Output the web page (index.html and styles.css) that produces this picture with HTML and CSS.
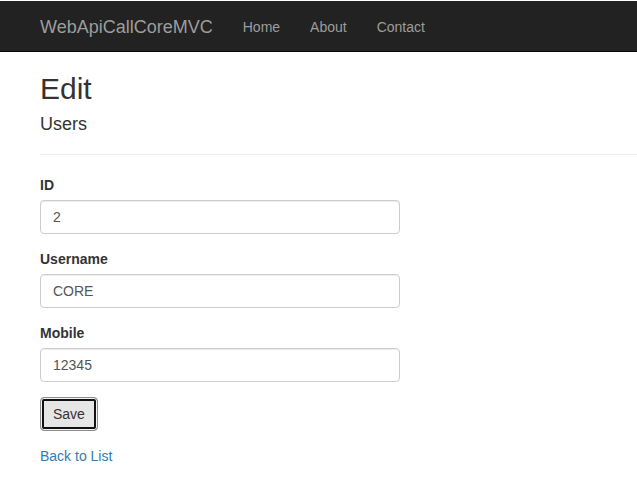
FILE: index.html
```html
<!DOCTYPE html>
<html>
<head>
<meta charset="utf-8">
<title>Edit - WebApiCallCoreMVC</title>
<link rel="stylesheet" href="styles.css">
</head>
<body>
<nav class="navbar">
  <div class="navbar-container">
    <a class="brand" href="#">WebApiCallCoreMVC</a>
    <ul class="nav">
      <li><a href="#">Home</a></li>
      <li><a href="#">About</a></li>
      <li><a href="#">Contact</a></li>
    </ul>
  </div>
</nav>
<main class="content">
  <h2 class="title">Edit</h2>
  <h4 class="subtitle">Users</h4>
  <hr class="divider">
  <form class="form">
    <div class="form-group">
      <label class="label">ID</label>
      <input class="input" type="text" value="2">
    </div>
    <div class="form-group">
      <label class="label">Username</label>
      <input class="input" type="text" value="CORE">
    </div>
    <div class="form-group">
      <label class="label">Mobile</label>
      <input class="input" type="text" value="12345">
    </div>
    <div class="form-group">
      <button class="btn" type="button">Save</button>
    </div>
  </form>
  <div class="back"><a class="link" href="#">Back to List</a></div>
</main>
</body>
</html>
```
FILE: styles.css
```css
* { box-sizing: border-box; }
html, body { margin: 0; padding: 0; }
body {
  font-family: "Liberation Sans", Arial, sans-serif;
  font-size: 14px;
  line-height: 20px;
  color: #333;
  background: #fff;
  padding-top: 1px;
}
.navbar {
  background: #222;
  border-bottom: 1px solid #080808;
  height: 51px;
}
.navbar-container {
  display: flex;
  align-items: flex-start;
  padding-left: 25px;
}
.brand {
  display: block;
  padding: 16px 15px 14px;
  font-size: 18px;
  line-height: 20px;
  height: 50px;
  color: #9d9d9d;
  text-decoration: none;
}
.nav {
  display: flex;
  list-style: none;
  margin: 0;
  padding: 0;
}
.nav a {
  display: block;
  padding: 16px 15px 14px;
  line-height: 20px;
  color: #9d9d9d;
  text-decoration: none;
}
.content {
  padding-left: 40px;
}
.title {
  margin: 20px 0 10px;
  font-size: 30px;
  font-weight: 500;
  line-height: 1.1;
}
.subtitle {
  margin: 10px 0 10px;
  font-size: 18px;
  font-weight: 500;
  line-height: 1.1;
}
.divider {
  margin: 19px 0 20px;
  border: 0;
  border-top: 1px solid #eee;
  height: 0;
}
.form { margin: 0; }
.form-group {
  margin-bottom: 15px;
  display: flex;
  flex-direction: column;
  align-items: flex-start;
}
.label {
  display: inline-block;
  font-weight: bold;
  margin-bottom: 5px;
  line-height: 20px;
}
.input {
  display: block;
  width: 360px;
  height: 34px;
  padding: 6px 12px;
  font-family: "Liberation Sans", Arial, sans-serif;
  font-size: 14px;
  line-height: 20px;
  color: #555;
  background: #fff;
  border: 1px solid #ccc;
  border-radius: 4px;
  box-shadow: inset 0 1px 1px rgba(0,0,0,0.075);
  margin: 0;
}
.btn {
  display: inline-block;
  height: 34px;
  padding: 6px 12px;
  font-family: "Liberation Sans", Arial, sans-serif;
  font-size: 14px;
  line-height: 20px;
  color: #333;
  background: #e6e6e6;
  border: 1px solid #8c8c8c;
  border-radius: 4px;
  box-shadow: inset 0 0 0 1px #f4f4f4, inset 0 0 0 3px #111;
  outline: none;
  margin: 0;
}
.back { line-height: 20px; }
.link {
  color: #337ab7;
  text-decoration: none;
}
```
